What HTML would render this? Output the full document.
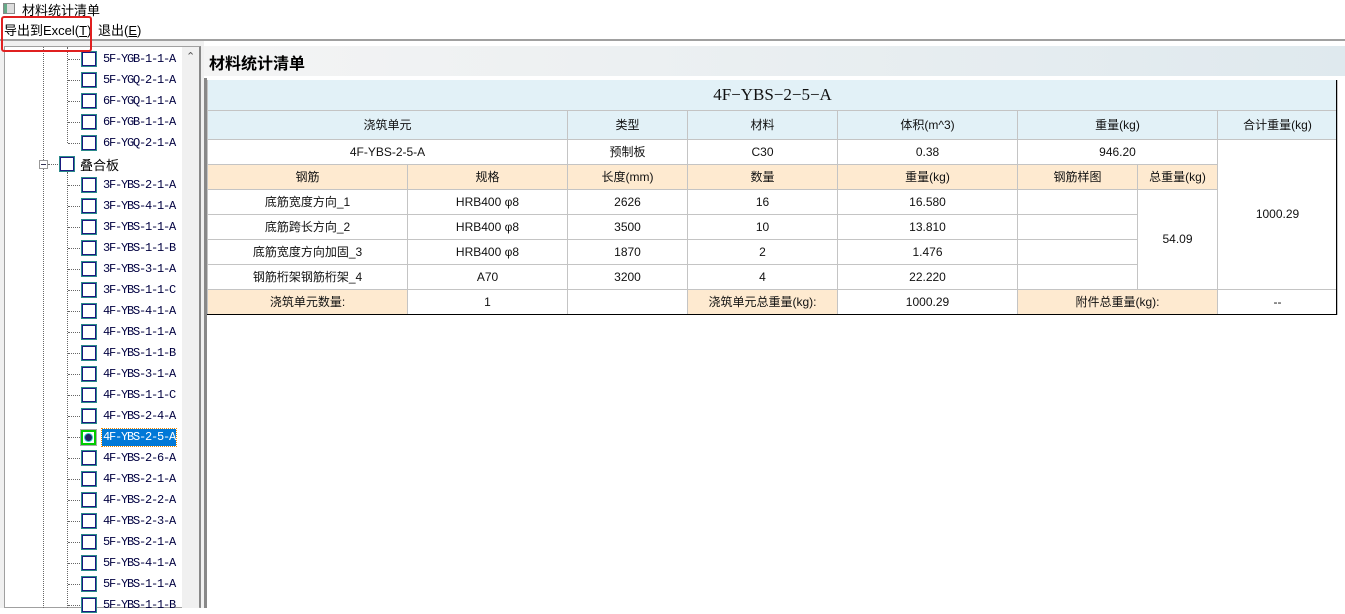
<!DOCTYPE html>
<html><head><meta charset="utf-8"><style>
*{margin:0;padding:0;box-sizing:border-box}
body{width:1345px;height:608px;overflow:hidden;background:#fff;font-family:"Liberation Sans","Noto Sans CJK SC",sans-serif;font-size:12px;color:#000;position:relative}
.a{position:absolute}
.tl{font-family:"Liberation Mono","Noto Sans CJK SC",monospace;font-size:12px;color:#000040;letter-spacing:-1.2px;white-space:nowrap}
.cb{position:absolute;width:16px;height:16px;border:1px solid #2a8a8a;background:#fff}
.cb::after{content:"";position:absolute;left:0;top:0;right:0;bottom:0;border:1.5px solid #1a1a80}
.hd{position:absolute;border-top:1px dotted #666;height:0}
table{border-collapse:collapse;position:absolute;left:207px;top:80px;width:1130px;table-layout:fixed}
td{border:1px solid #c4c4c4;text-align:center;font-size:12px;height:25px;padding:0;color:#111}
.b{background:#e2f1f7}.o{background:#feead0}
</style></head><body>
<div class="a" style="left:3px;top:3px;width:12px;height:11px;border:1px solid #888;background:linear-gradient(90deg,#6a8 0 30%,#ddd 30%)"></div>
<div class="a" style="left:22px;top:0px;font-size:13px">材料统计清单</div>
<div class="a" style="left:4px;top:20px;font-size:13px">导出到Excel(<u>T</u>)</div>
<div class="a" style="left:98px;top:20px;font-size:13px">退出(<u>E</u>)</div>
<div class="a" style="left:0;top:39px;width:1345px;height:2px;background:#a0a0a0"></div>
<div class="a" style="left:0;top:41px;width:204px;height:567px;background:#f0f0f0"></div>
<div class="a" style="left:4px;top:46px;width:197px;height:562px;border:1px solid #a0a0a0;border-right:2px solid #888;background:#fff"></div>
<div class="a" style="left:182px;top:47px;width:17px;height:561px;background:#f0f0f0"></div>
<div class="a" style="left:186px;top:50px;font-size:11px;color:#555">⌃</div>
<div class="a" style="left:43px;top:47px;height:561px;border-left:1px dotted #666"></div>
<div class="a" style="left:67px;top:47px;height:96px;border-left:1px dotted #666"></div>
<div class="a" style="left:67px;top:172px;height:436px;border-left:1px dotted #666"></div>
<div class="a" style="left:39px;top:160px;width:9px;height:9px;border:1px solid #999;background:#fff"><div class="a" style="left:1px;top:3px;width:5px;height:1px;background:#335"></div></div>
<div class="hd" style="left:48px;top:164px;width:10px"></div>
<div class="cb" style="left:59px;top:156px"></div>
<div class="a" style="left:80px;top:155px;font-size:13px;color:#000">叠合板</div>
<div id="tree"></div>
<div class="a" style="left:1px;top:16px;width:91px;height:36px;border:2px solid #e02020;border-radius:3px"></div>
<div class="a" style="left:204px;top:41px;width:1141px;height:567px;background:#fff"></div>
<div class="a" style="left:204px;top:46px;width:1141px;height:30px;background:linear-gradient(90deg,#f4f4f4,#dfe9ee)"></div>
<div class="a" style="left:209px;top:50px;font-size:16px;font-weight:bold">材料统计清单</div>
<div class="a" style="left:204px;top:78px;width:3px;height:530px;background:#888"></div>
<table>
<colgroup><col style="width:200px"><col style="width:160px"><col style="width:120px"><col style="width:150px"><col style="width:180px"><col style="width:120px"><col style="width:80px"><col style="width:120px"></colgroup>
<tr><td colspan="8" class="b" style="height:30px;font-family:'Liberation Serif',serif;font-size:17px;border-top:none">4F−YBS−2−5−A</td></tr>
<tr><td colspan="2" class="b" style="height:29px">浇筑单元</td><td class="b">类型</td><td class="b">材料</td><td class="b">体积(m^3)</td><td colspan="2" class="b">重量(kg)</td><td class="b">合计重量(kg)</td></tr>
<tr><td colspan="2">4F-YBS-2-5-A</td><td>预制板</td><td>C30</td><td>0.38</td><td colspan="2">946.20</td><td rowspan="6">1000.29</td></tr>
<tr><td class="o">钢筋</td><td class="o">规格</td><td class="o">长度(mm)</td><td class="o">数量</td><td class="o">重量(kg)</td><td class="o">钢筋样图</td><td class="o">总重量(kg)</td></tr>
<tr><td>底筋宽度方向_1</td><td>HRB400 φ8</td><td>2626</td><td>16</td><td>16.580</td><td></td><td rowspan="4">54.09</td></tr>
<tr><td>底筋跨长方向_2</td><td>HRB400 φ8</td><td>3500</td><td>10</td><td>13.810</td><td></td></tr>
<tr><td>底筋宽度方向加固_3</td><td>HRB400 φ8</td><td>1870</td><td>2</td><td>1.476</td><td></td></tr>
<tr><td>钢筋桁架钢筋桁架_4</td><td>A70</td><td>3200</td><td>4</td><td>22.220</td><td></td></tr>
<tr><td class="o">浇筑单元数量:</td><td>1</td><td></td><td class="o">浇筑单元总重量(kg):</td><td>1000.29</td><td colspan="2" class="o">附件总重量(kg):</td><td>--</td></tr>
</table>
<div class="a" style="left:1336px;top:80px;width:1px;height:235px;background:#000"></div>
<div class="a" style="left:207px;top:314px;width:1130px;height:1px;background:#000"></div>
<script>
var L=["5F-YGB-1-1-A","5F-YGQ-2-1-A","6F-YGQ-1-1-A","6F-YGB-1-1-A","6F-YGQ-2-1-A",null,"3F-YBS-2-1-A","3F-YBS-4-1-A","3F-YBS-1-1-A","3F-YBS-1-1-B","3F-YBS-3-1-A","3F-YBS-1-1-C","4F-YBS-4-1-A","4F-YBS-1-1-A","4F-YBS-1-1-B","4F-YBS-3-1-A","4F-YBS-1-1-C","4F-YBS-2-4-A","4F-YBS-2-5-A","4F-YBS-2-6-A","4F-YBS-2-1-A","4F-YBS-2-2-A","4F-YBS-2-3-A","5F-YBS-2-1-A","5F-YBS-4-1-A","5F-YBS-1-1-A","5F-YBS-1-1-B"];
var h="";
for(var i=0;i<L.length;i++){if(!L[i])continue;var y=59+i*21;
h+='<div class="hd" style="left:68px;top:'+y+'px;width:12px"></div>';
if(L[i]=="4F-YBS-2-5-A"){h+='<div class="a" style="left:80px;top:'+(y-8)+'px;width:17px;height:17px;border:1px solid #aaa;background:#0c0"><div class="a" style="left:2px;top:2px;width:11px;height:11px;background:#fff"><div class="a" style="left:2px;top:2px;width:7px;height:7px;border-radius:50%;background:#226;box-shadow:0 0 0 1px #3cc"></div></div></div>';
h+='<div class="a tl" style="left:102px;top:'+(y-8)+'px;height:17px;line-height:17px;padding:0 1px;background:#0078d7;color:#fff;outline:1px dotted #e80">'+L[i]+'</div>';}
else{h+='<div class="cb" style="left:81px;top:'+(y-8)+'px"></div><div class="a tl" style="left:103px;top:'+(y-8)+'px;line-height:17px">'+L[i]+'</div>';}}
document.getElementById("tree").innerHTML=h;
</script>
</body></html>
